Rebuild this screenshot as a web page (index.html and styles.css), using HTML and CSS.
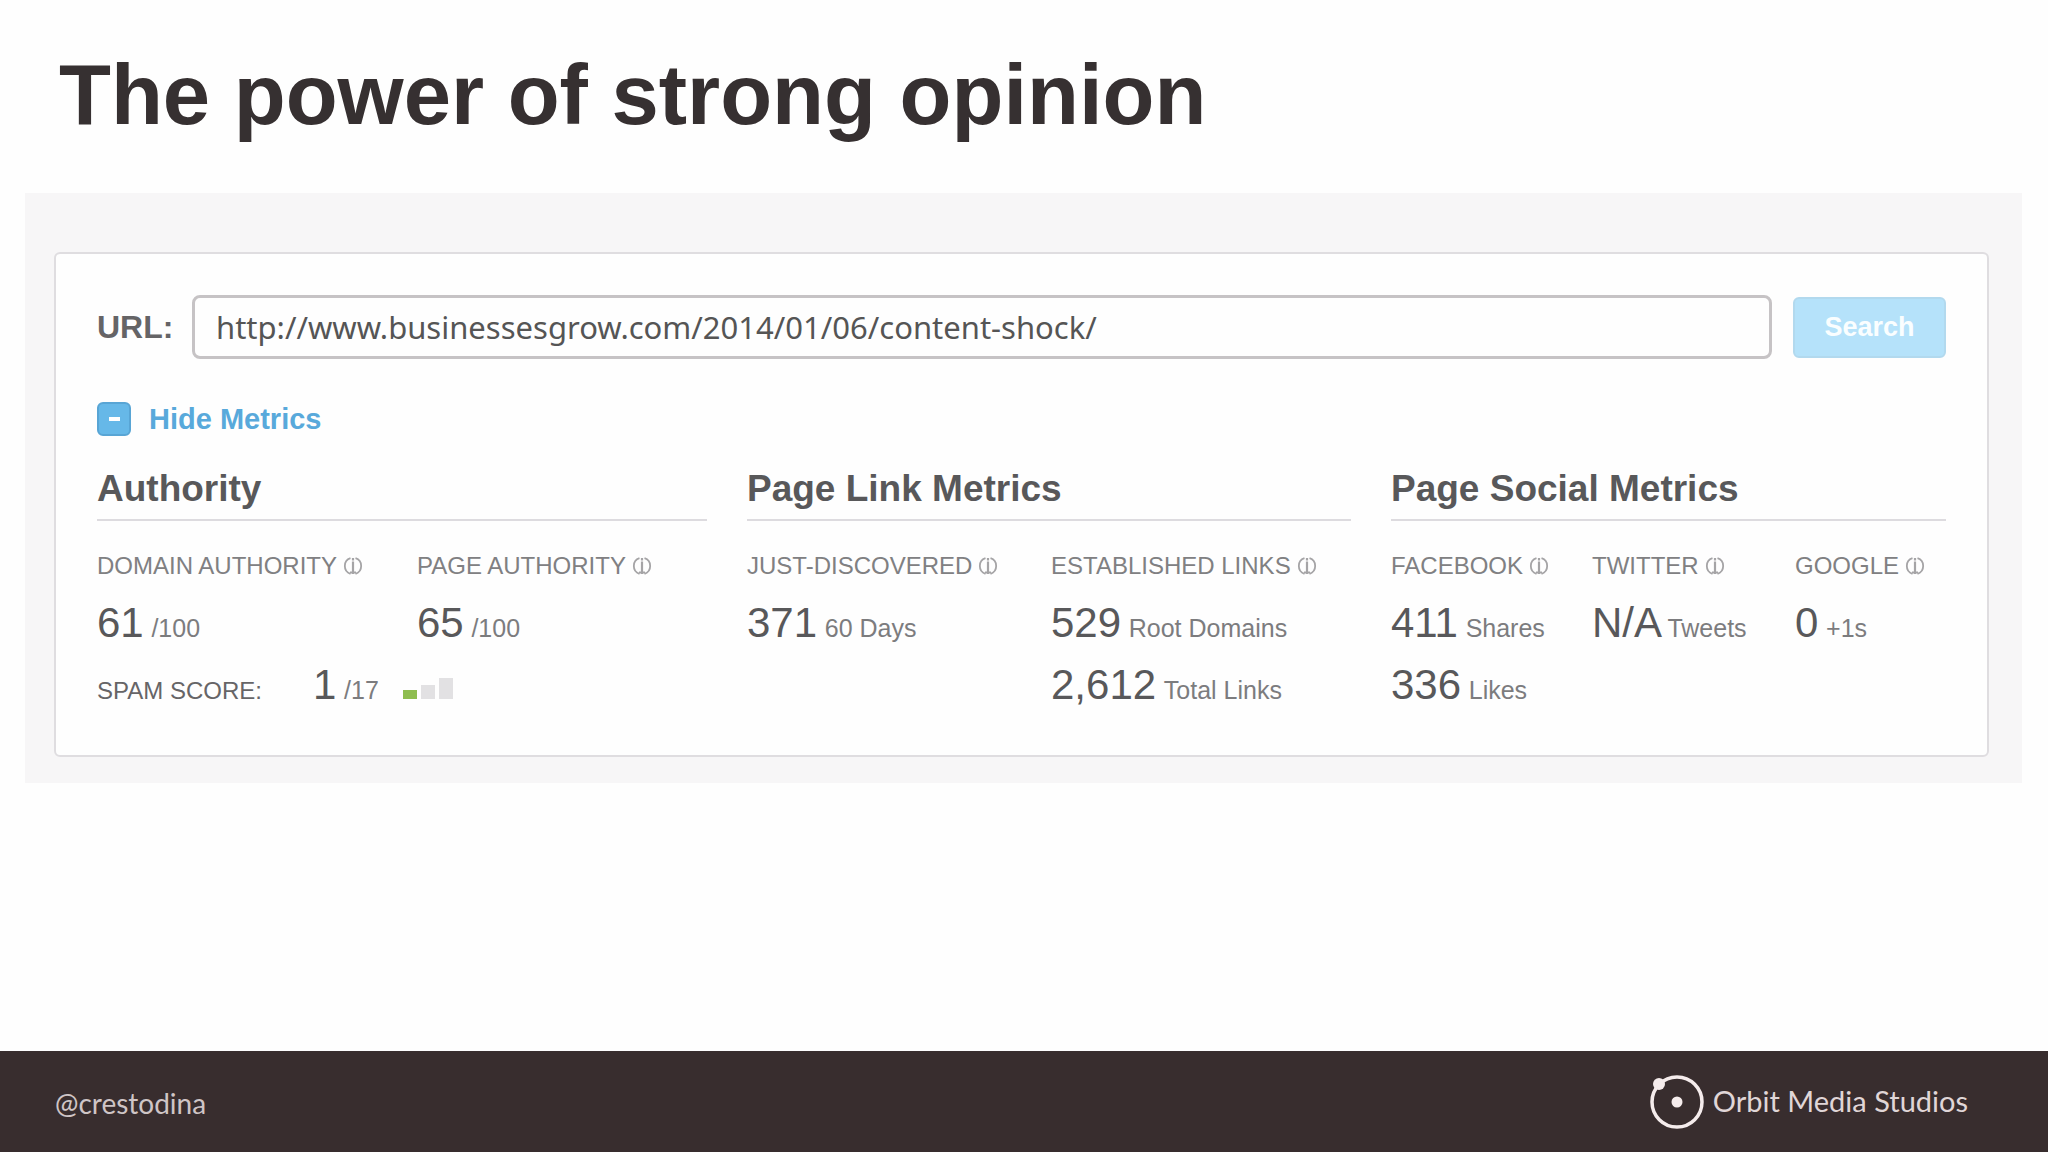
FILE: index.html
```html
<!DOCTYPE html>
<html lang="en">
<head>
<meta charset="utf-8">
<meta name="viewport" content="width=device-width, initial-scale=1">
<title>The power of strong opinion</title>
<link rel="stylesheet" href="styles.css">
</head>
<body>
<svg width="0" height="0" class="defs" aria-hidden="true">
  <symbol id="info" viewBox="0 0 20 20">
    <path d="M7.5 2.2A8.2 8.2 0 0 0 7.5 17.8M12.5 2.2A8.2 8.2 0 0 1 12.5 17.8" fill="none" stroke="currentColor" stroke-width="1.8"/>
    <path d="M10 2v2.500M10 5.500V18M7 16.500h6" fill="none" stroke="currentColor" stroke-width="2.200"/>
  </symbol>
</svg>
<header class="title-bar"><h1 class="title">The power of strong opinion</h1></header>
<main class="panel">
  <section class="card">
    <form class="search">
      <label class="search-label" for="url">URL:</label>
      <input class="search-input" id="url" type="text" value="http://www.businessesgrow.com/2014/01/06/content-shock/">
      <button class="search-button" type="button">Search</button>
    </form>
    <button class="toggle" type="button"><span class="toggle-icon"></span>Hide Metrics</button>
    <div class="groups">
      <section class="group">
        <h2 class="group-title">Authority</h2>
        <div class="metrics metrics-authority">
          <div class="metric">
            <h3 class="label">DOMAIN AUTHORITY<svg class="info"><use href="#info"/></svg></h3>
            <p class="value">61 <small class="unit">/100</small></p>
          </div>
          <div class="metric">
            <h3 class="label">PAGE AUTHORITY<svg class="info"><use href="#info"/></svg></h3>
            <p class="value">65 <small class="unit">/100</small></p>
          </div>
          <div class="spam">
            <h3 class="label spam-label">SPAM SCORE:</h3>
            <p class="value">1 <small class="unit">/17</small></p>
            <span class="bars"><span class="bar bar-low"></span><span class="bar bar-mid"></span><span class="bar bar-high"></span></span>
          </div>
        </div>
      </section>
      <section class="group">
        <h2 class="group-title">Page Link Metrics</h2>
        <div class="metrics metrics-link">
          <div class="metric">
            <h3 class="label">JUST-DISCOVERED<svg class="info"><use href="#info"/></svg></h3>
            <p class="value">371 <small class="unit">60 Days</small></p>
          </div>
          <div class="metric">
            <h3 class="label">ESTABLISHED LINKS<svg class="info"><use href="#info"/></svg></h3>
            <p class="value">529 <small class="unit">Root Domains</small></p>
            <p class="value">2,612 <small class="unit">Total Links</small></p>
          </div>
        </div>
      </section>
      <section class="group">
        <h2 class="group-title">Page Social Metrics</h2>
        <div class="metrics metrics-social">
          <div class="metric">
            <h3 class="label">FACEBOOK<svg class="info"><use href="#info"/></svg></h3>
            <p class="value">411 <small class="unit">Shares</small></p>
            <p class="value">336 <small class="unit">Likes</small></p>
          </div>
          <div class="metric">
            <h3 class="label">TWITTER<svg class="info"><use href="#info"/></svg></h3>
            <p class="value">N/A <small class="unit">Tweets</small></p>
          </div>
          <div class="metric">
            <h3 class="label">GOOGLE<svg class="info"><use href="#info"/></svg></h3>
            <p class="value">0 <small class="unit">+1s</small></p>
          </div>
        </div>
      </section>
    </div>
  </section>
</main>
<footer class="footer">
  <span class="handle">@crestodina</span>
  <span class="brand">
    <svg class="logo" viewBox="0 0 56 56" aria-hidden="true">
      <circle cx="28" cy="28" r="25" fill="none" stroke="#f5ecec" stroke-width="3.500"/>
      <circle cx="28" cy="28" r="5.500" fill="#f5ecec"/>
      <circle cx="10" cy="10" r="6" fill="#f5ecec"/>
    </svg>
    <span class="brand-name">Orbit Media Studios</span>
  </span>
</footer>
</body>
</html>
```
FILE: styles.css
```css
* { box-sizing: border-box; }
body {
  margin: 0;
  min-height: 100vh;
  display: flex;
  flex-direction: column;
  background: #fefefe;
  color: #58585a;
  font-family: "Liberation Sans", Arial, sans-serif;
}
h1, h2, h3, p { margin: 0; }
.defs { position: absolute; }
.title-bar { padding: 45px 59px 0; }
.title {
  font-size: 85px;
  line-height: 100px;
  color: #363031;
}
.panel {
  margin: 48px 26px 0 25px;
  padding: 59px 33px 26px 29px;
  background: #f7f6f7;
}
.card {
  padding: 41px 41px 39px;
  background: #fefefe;
  border: 2px solid #dfdde0;
  border-radius: 6px;
}
.search {
  display: flex;
  align-items: center;
}
.search-label {
  width: 95px;
  font-size: 32px;
  font-weight: bold;
  color: #656466;
}
.search-input {
  flex: 1;
  min-width: 0;
  height: 64px;
  padding: 0 21px;
  border: 3px solid #c6c3c5;
  border-radius: 8px;
  background: #fefefe;
  color: #555;
  font: 31px/40px "Noto Sans", sans-serif;
}
.search-button {
  width: 153px;
  height: 61px;
  margin-left: 21px;
  border: 2px solid #b2d9ee;
  border-radius: 6px;
  background: #b5e2fa;
  color: #fafeff;
  font: bold 27px "Liberation Sans", Arial, sans-serif;
}
.toggle {
  display: flex;
  align-items: center;
  gap: 18px;
  margin-top: 42px;
  padding: 0;
  border: 0;
  background: none;
  color: #58a9db;
  font: bold 29px/36px "Liberation Sans", Arial, sans-serif;
}
.toggle-icon {
  display: flex;
  align-items: center;
  justify-content: center;
  width: 34px;
  height: 34px;
  border: 2px solid #58a5d5;
  border-radius: 6px;
  background: #66b8e8;
}
.toggle-icon::before {
  content: "";
  width: 11px;
  height: 4px;
  background: #fff;
}
.groups {
  display: grid;
  grid-template-columns: 610fr 604fr 555fr;
  gap: 40px;
  margin-top: 29px;
}
.group-title {
  padding-bottom: 7px;
  border-bottom: 2px solid #dddbdf;
  font-size: 37px;
  line-height: 46px;
  white-space: nowrap;
}
.metrics {
  display: grid;
  padding-top: 28px;
}
.metrics-authority { grid-template-columns: 320fr 290fr; }
.metrics-link { grid-template-columns: 304fr 300fr; }
.metrics-social { grid-template-columns: 201fr 203fr 151fr; }
.label {
  display: flex;
  align-items: center;
  gap: 6px;
  font-size: 24px;
  line-height: 34px;
  font-weight: normal;
  color: #808082;
  white-space: nowrap;
}
.info {
  width: 20px;
  height: 20px;
  color: #a5a4a6;
}
.value {
  font-size: 42px;
  line-height: 62px;
  white-space: nowrap;
}
.metric .value:first-of-type { margin-top: 9px; }
.unit {
  margin-left: -4px;
  font-size: 25px;
  line-height: 30px;
  color: #7c7c7e;
}
.spam {
  grid-column: 1 / -1;
  display: flex;
  align-items: baseline;
}
.spam-label {
  width: 216px;
  color: #666567;
}
.bars {
  display: flex;
  align-items: flex-end;
  gap: 4px;
  margin-left: 24px;
}
.bar { width: 14px; background: #e2e1e3; }
.bar-low { height: 9px; background: #8ebd4f; }
.bar-mid { height: 14px; }
.bar-high { height: 21px; }
.footer {
  display: flex;
  align-items: center;
  justify-content: space-between;
  height: 101px;
  margin-top: auto;
  padding: 0 80px 0 55px;
  background: #382d2e;
}
.handle {
  padding-top: 2px;
  color: #cfc5c6;
  font: 28px/34px Lato, sans-serif;
}
.brand {
  display: flex;
  align-items: center;
  gap: 8px;
}
.logo { width: 56px; height: 56px; }
.brand-name {
  padding-bottom: 2px;
  color: #e0d6d7;
  font: 29px/40px Lato, sans-serif;
}
```
